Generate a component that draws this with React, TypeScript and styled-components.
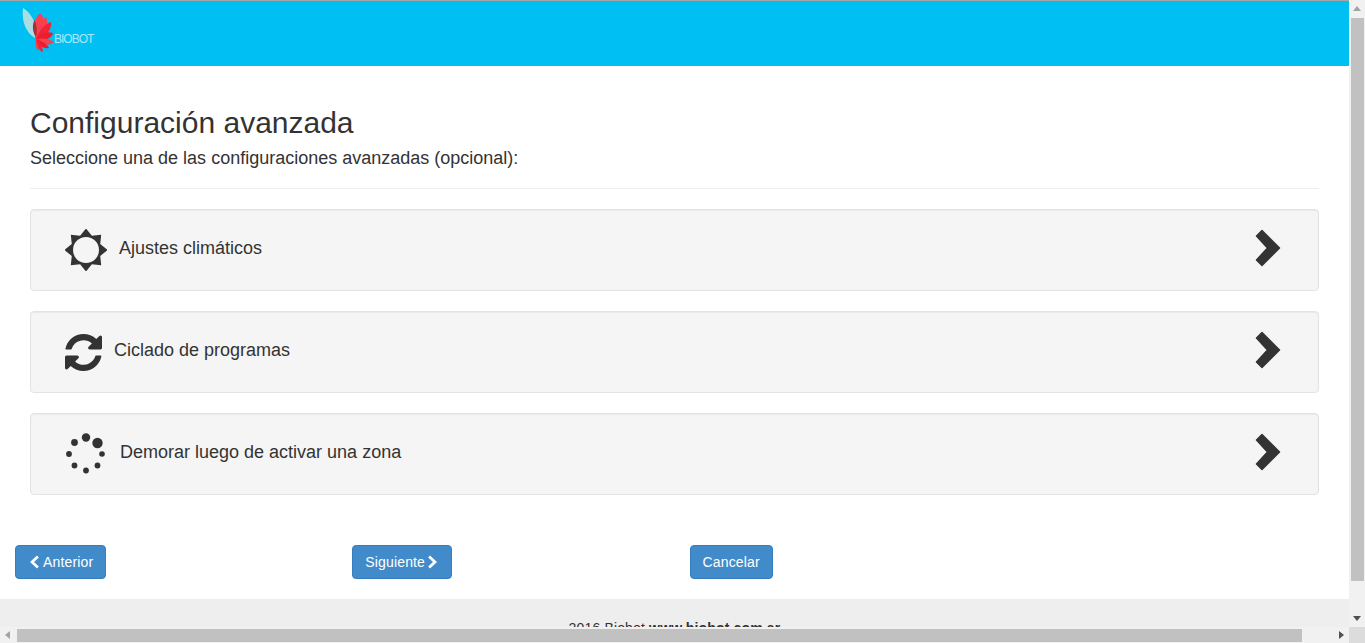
import React from "react";
import styled, { createGlobalStyle } from "styled-components";

const Global = createGlobalStyle`
  html, body { margin: 0; padding: 0; height: 643px; overflow: hidden; background: #fff; }
  body { font-family: "Liberation Sans", Arial, sans-serif; color: #333; }
`;

const Page = styled.div`
  width: 1349px;
  height: 643px;
  overflow: hidden;
  display: flex;
  flex-direction: column;
`;
const Header = styled.header`
  height: 65px;
  flex: none;
  background: #00bff3;
  border-top: 1px solid #a6a6a6;
  display: flex;
  align-items: flex-start;
  padding-left: 21px;
`;
const Logo = styled.div`
  position: relative;
  width: 80px;
  height: 60px;
`;
const LogoText = styled.span`
  position: absolute;
  left: 33px;
  top: 32px;
  font-size: 12px;
  line-height: 12px;
  font-weight: 400;
  letter-spacing: -1px;
  color: #a8e8fb;
`;
const Main = styled.main`
  padding: 40px 30px 0;
  height: 533px;
  flex: none;
  box-sizing: border-box;
`;
const Title = styled.h3`
  margin: 0;
  font-size: 30px;
  line-height: 33px;
  font-weight: 400;
  color: #333;
`;
const Subtitle = styled.p`
  margin: 9px 0 0;
  font-size: 18px;
  line-height: 20px;
`;
const Rule = styled.hr`
  margin: 20px 0 20px;
  border: 0;
  border-top: 1px solid #eee;
`;
const List = styled.div`
  display: flex;
  flex-direction: column;
  gap: 20px;
`;
const Item = styled.div`
  height: 82px;
  box-sizing: border-box;
  background: #f5f5f5;
  border: 1px solid #e3e3e3;
  border-radius: 4px;
  box-shadow: inset 0 1px 1px rgba(0, 0, 0, 0.05);
  display: flex;
  align-items: center;
  padding: 0 37px 0 34px;
`;
const IconBox = styled.div<{ $w: number; $gap: number }>`
  width: ${(p) => p.$w}px;
  margin-right: ${(p) => p.$gap}px;
  flex: none;
  display: flex;
  color: #333;
`;
const Label = styled.span`
  font-size: 18px;
  line-height: 20px;
  margin-top: -4px;
  flex: 1;
`;
const Chevron = styled.svg`
  width: 26px;
  height: 38px;
  flex: none;
  margin-top: -4px;
`;
const Actions = styled.div`
  display: grid;
  grid-template-columns: repeat(4, 337.25px);
  margin: 50px -30px 0;
`;
const Cell = styled.div`
  padding-left: 15px;
`;
const Button = styled.button<{ $gap?: number }>`
  height: 34px;
  box-sizing: border-box;
  padding: 0 12px;
  background: #428bca;
  border: 1px solid #357ebd;
  border-radius: 4px;
  color: #fff;
  font-family: inherit;
  font-size: 14px;
  letter-spacing: 0.16px;
  display: inline-flex;
  align-items: center;
  gap: ${(p) => p.$gap ?? 4}px;
`;
const Footer = styled.footer`
  flex: 1;
  background: #eee;
  text-align: center;
  font-size: 14px;
  line-height: 20px;
  letter-spacing: 0.16px;
  padding-top: 19px;
  color: #333;
`;
const VBar = styled.div`
  position: fixed;
  top: 0;
  right: 0;
  width: 16px;
  height: 643px;
  background: #f1f1f1;
`;
const VThumb = styled.div`
  position: absolute;
  left: 2px;
  top: 18px;
  width: 13px;
  height: 563px;
  background: #c1c1c1;
`;
const HBar = styled.div`
  position: fixed;
  left: 0;
  bottom: 0;
  width: 1349px;
  height: 16px;
  background: #f1f1f1;
`;
const HThumb = styled.div`
  position: absolute;
  left: 17px;
  top: 2px;
  width: 1285px;
  height: 13px;
  background: #c1c1c1;
`;
const Corner = styled.div`
  position: fixed;
  right: 0;
  bottom: 0;
  width: 16px;
  height: 16px;
  background: #dcdcdc;
`;
const Arrow = styled.svg<{ $x: number; $y: number }>`
  position: absolute;
  left: ${(p) => p.$x}px;
  top: ${(p) => p.$y}px;
  width: 8px;
  height: 8px;
`;
const Small = styled.svg`
  width: 11px;
  height: 14px;
`;
const LogoSvg = styled.svg`
  display: block;
`;

const starPoints = Array.from({ length: 16 }, (_, i) => {
  const a = (i * Math.PI) / 8 - Math.PI / 2;
  const r = i % 2 === 0 ? 21.5 : 15.4;
  return `${(21 + r * Math.cos(a)).toFixed(2)},${(21 + r * Math.sin(a)).toFixed(2)}`;
}).join(" ");

const Sun = () => (
  <svg width="42" height="42" viewBox="0 0 42 42" fill="#333">
    <polygon points={starPoints} />
    <circle cx="21" cy="21" r="13" fill="#f5f5f5" />
  </svg>
);
const Refresh = () => (
  <svg width="37" height="37" viewBox="128 128 1536 1536" fill="#333">
    <path d="M1639 1056q0 5-1 7-64 268-268 434.5t-478 166.5q-146 0-282.5-55t-243.5-157l-129 129q-19 19-45 19t-45-19-19-45v-448q0-26 19-45t45-19h448q26 0 45 19t19 45-19 45l-137 137q71 66 161 102t187 36q134 0 250-65t186-179q11-17 53-117 8-23 30-23h192q13 0 22.5 9.5t9.5 22.5zm25-800v448q0 26-19 45t-45 19h-448q-26 0-45-19t-19-45 19-45l138-138q-148-137-349-137-134 0-250 65t-186 179q-11 17-53 117-8 23-30 23h-199q-13 0-22.5-9.5t-9.5-22.5v-7q65-268 270-434.5t480-166.5q146 0 284 55.5t245 156.5l130-129q19-19 45-19t45 19 19 45z" />
  </svg>
);
const Spinner = () => (
  <svg width="40" height="42" viewBox="0 0 40 42" fill="#333">
    <circle cx="21" cy="4.500" r="4.200" />
    <circle cx="32.500" cy="10" r="5.200" />
    <circle cx="37" cy="21" r="2.800" />
    <circle cx="32.500" cy="32.500" r="2.900" />
    <circle cx="21" cy="37.500" r="2.900" />
    <circle cx="9.500" cy="32.500" r="2.900" />
    <circle cx="4" cy="21" r="2.900" />
    <circle cx="9.500" cy="9.500" r="3.400" />
  </svg>
);
const ChevronRight = () => (
  <Chevron viewBox="0 0 26 38">
    <polygon points="1.500,7 7,1.500 24.500,19 7,36.500 1.500,31 12.500,19" fill="#333" stroke="#333" strokeWidth="1.500" strokeLinejoin="round" />
  </Chevron>
);
const BtnChevron = ({ left }: { left?: boolean }) => (
  <Small viewBox="0 0 11 14">
    <polygon points={left ? "9,0.5 10.8,2.5 6,7 10.8,11.5 9,13.5 2,7" : "2,0.5 0.2,2.5 5,7 0.2,11.5 2,13.5 9,7"} fill="#fff" />
  </Small>
);
const petals: [string, string][] = [
  ["M15 38 C11 28 13 18 19 12 C24 17 25 25 21 31 Z", "#f8404f"],
  ["M15 38 C15 28 19 20 25 16 C28 22 26 29 20 34 Z", "#f8404f"],
  ["M15 38 C18 29 24 23 30 21 C31 27 27 33 20 37 Z", "#f02436"],
  ["M15 38 C20 32 26 30 32 32 C31 37 24 40 17 39 Z", "#ee1c2e"],
  ["M15 38 C21 37 28 37 33 41 C29 45 21 44 16 40 Z", "#f8404f"],
  ["M15 38 C20 40 26 42 28 47 C23 48 18 45 15 40 Z", "#ee1c2e"],
  ["M15 38 C18 41 22 46 22 51 C18 50 15 45 15 39 Z", "#f02436"],
  ["M15 38 C16 42 18 46 17 50 C15 48 14 43 15 38 Z", "#f8404f"],
];
const LogoMark = () => (
  <LogoSvg width="40" height="54" viewBox="0 0 40 54">
    <path d="M2 7 C9 11 14 20 15 27 C15.500 31 15 35 14 37 C7 33 0 23 2 7Z" fill="#a9dfe3" />
    {petals.map(([d, fill]) => (
      <path key={d} d={d} fill={fill} />
    ))}
    <path d="M13.500 19 C15.500 23 16.500 30 15 36 C12 32 10.500 25 13.500 19Z" fill="#a5303f" />
  </LogoSvg>
);

export default function App() {
  return (
    <>
      <Global />
      <Page>
        <Header>
          <Logo>
            <LogoMark />
            <LogoText>BIOBOT</LogoText>
          </Logo>
        </Header>
        <Main>
          <Title>Configuración avanzada</Title>
          <Subtitle>Seleccione una de las configuraciones avanzadas (opcional):</Subtitle>
          <Rule />
          <List>
            <Item>
              <IconBox $w={42} $gap={12}><Sun /></IconBox>
              <Label>Ajustes climáticos</Label>
              <ChevronRight />
            </Item>
            <Item>
              <IconBox $w={37} $gap={12}><Refresh /></IconBox>
              <Label>Ciclado de programas</Label>
              <ChevronRight />
            </Item>
            <Item>
              <IconBox $w={40} $gap={15}><Spinner /></IconBox>
              <Label>Demorar luego de activar una zona</Label>
              <ChevronRight />
            </Item>
          </List>
          <Actions>
            <Cell><Button $gap={4}><BtnChevron left />Anterior</Button></Cell>
            <Cell><Button $gap={3}>Siguiente<BtnChevron /></Button></Cell>
            <Cell><Button>Cancelar</Button></Cell>
          </Actions>
        </Main>
        <Footer>2016 Biobot <b>www.biobot.com.ar</b></Footer>
      </Page>
      <VBar>
        <Arrow $x={4} $y={5} viewBox="0 0 8 8"><polygon points="4,1 8,6 0,6" fill="#a3a3a3" /></Arrow>
        <VThumb />
        <Arrow $x={4} $y={614} viewBox="0 0 8 8"><polygon points="0,2 8,2 4,7" fill="#505050" /></Arrow>
      </VBar>
      <HBar>
        <Arrow $x={4} $y={4} viewBox="0 0 8 8"><polygon points="6,0 6,8 1,4" fill="#a3a3a3" /></Arrow>
        <HThumb />
        <Arrow $x={1337} $y={4} viewBox="0 0 8 8"><polygon points="2,0 2,8 7,4" fill="#505050" /></Arrow>
      </HBar>
      <Corner />
    </>
  );
}
